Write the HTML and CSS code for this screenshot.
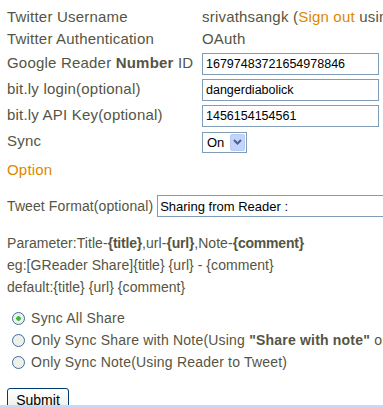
FILE: index.html
```
<!DOCTYPE html>
<html>
<head>
   <title>Twitter Sync Settings</title>
   <link rel="stylesheet" href="styles.css">
</head>
<body>
<div id="doc">
  <form id="settings">
    <table class="fields">
      <tr>
        <td class="lbl">Twitter Username</td>
        <td class="val">srivathsangk (<a href="#">Sign out</a> using OAuth)</td>
      </tr>
      <tr>
        <td class="lbl">Twitter Authentication</td>
        <td class="val">OAuth</td>
      </tr>
      <tr>
        <td class="lbl">Google Reader <b>Number</b> ID</td>
        <td class="val"><input class="txt" type="text" name="gid" value="16797483721654978846"/></td>
      </tr>
      <tr>
        <td class="lbl">bit.ly login(optional)</td>
        <td class="val"><input class="txt" type="text" name="bitly" value="dangerdiabolick"/></td>
      </tr>
      <tr>
        <td class="lbl">bit.ly API Key(optional)</td>
        <td class="val"><input class="txt" type="text" name="key" value="1456154154561"/></td>
      </tr>
      <tr>
        <td class="lbl">Sync</td>
        <td class="val">
          <span class="sel">
            <select name="sync"><option>On</option><option>Off</option></select>
            <span class="arrow"><svg width="11" height="8" viewBox="0 0 11 8"><path d="M2 2 L5.5 5.5 L9 2" fill="none" stroke="#4d6185" stroke-width="2"/></svg></span>
          </span>
        </td>
      </tr>
    </table>

    <h2 class="option">Option</h2>

    <div class="format">
      <label for="fmt">Tweet Format(optional)</label>
      <input class="txt wide" type="text" id="fmt" name="fmt" value="Sharing from Reader :"/>
    </div>

    <div class="help">
      <p>Parameter:Title-<b>{title}</b>,url-<b>{url}</b>,Note-<b>{comment}</b></p>
      <p>eg:[GReader Share]{title} {url} - {comment}</p>
      <p>default:{title} {url} {comment}</p>
    </div>

    <ul class="radios">
      <li><label><input type="radio" name="mode" checked/> Sync All Share</label></li>
      <li><label><input type="radio" name="mode"/> Only Sync Share with Note(Using <b>"Share with note"</b> or Note in Reader)</label></li>
      <li><label><input type="radio" name="mode"/> Only Sync Note(Using Reader to Tweet)</label></li>
    </ul>

    <div class="foot">
      <input class="btn" type="submit" value="Submit"/>
    </div>
  </form>
</div>
</body>
</html>
```

FILE: styles.css
```
html, body {
      margin: 0;
      overflow: hidden;
}
body {
      font-family: "Liberation Sans", Arial, sans-serif;
      color: #555544;
      background: #fff;
      letter-spacing: 0.2px;
}
a {
      color: #dd8800;
      text-decoration: none;
}
#doc {
      padding: 6px 0 0 7px;
      white-space: nowrap;
}

table.fields {
      border-collapse: collapse;
      table-layout: fixed;
      width: 420px;
      font-size: 15px;
}
table.fields td {
      padding: 0;
      height: 22px;
      line-height: 22px;
      vertical-align: middle;
      overflow: visible;
}
td.lbl {
      width: 195px;
}
table.fields tr:nth-child(n+3) td {
      height: 26px;
}

input.txt {
      box-sizing: border-box;
      width: 177px;
      height: 22px;
      border: 1px solid #7f9db9;
      padding: 0 3px;
      margin: 0;
      font-family: "Liberation Sans", Arial, sans-serif;
      font-size: 12.5px;
      letter-spacing: 0;
      color: #000;
      vertical-align: middle;
}

.sel {
      display: inline-flex;
      align-items: center;
      box-sizing: border-box;
      height: 21px;
      width: 45px;
      border: 1px solid #7f9db9;
      vertical-align: middle;
      margin-top: 1px;
}
.sel select {
      -webkit-appearance: none;
      appearance: none;
      border: none;
      background: #fff;
      font-family: "Liberation Sans", Arial, sans-serif;
      font-size: 13px;
      color: #000;
      padding: 0 0 0 4px;
      width: 27px;
      height: 17px;
      outline: none;
}
.sel .arrow {
      display: flex;
      align-items: center;
      justify-content: center;
      width: 15px;
      height: 17px;
      background: #c3d3fd;
      border: 1px solid #b9cbf3;
      box-sizing: border-box;
      border-radius: 2px;
}

h2.option {
      font-size: 15px;
      font-weight: normal;
      color: #dd8800;
      margin: 5px 0 0 0;
      line-height: 22px;
}

.format {
      font-size: 14px;
      margin-top: 14px;
      display: flex;
      align-items: center;
      gap: 4px;
      letter-spacing: 0.1px;
}
input.wide {
      width: 260px;
      height: 22px;
      font-size: 13px;
      padding: 0 2px;
      flex-shrink: 0;
}

.help {
      font-size: 14px;
      margin-top: 15px;
      letter-spacing: 0.05px;
}
.help p {
      margin: 0;
      line-height: 22px;
}
.help b {
      letter-spacing: -0.2px;
}

ul.radios {
      list-style: none;
      margin: 9px 0 0 0;
      padding: 0;
      font-size: 14px;
}
ul.radios li {
      line-height: 22px;
      height: 22px;
}
ul.radios input {
      -webkit-appearance: none;
      appearance: none;
      width: 13px;
      height: 13px;
      border: 1px solid #3d6e9f;
      border-radius: 50%;
      background: #eef0ea;
      margin: 0 2px 0 5px;
      vertical-align: -2px;
      box-sizing: border-box;
}
ul.radios input:checked {
      background: radial-gradient(circle, #3cb73c 0, #3cb73c 2px, #eef0ea 2.5px);
}

.foot {
      margin-top: 15px;
      height: 17px;
      overflow: hidden;
      border-bottom: 2px solid #c6d9f5;
      margin-left: -7px;
      padding-left: 7px;
}
input.btn {
      font-family: "Liberation Sans", Arial, sans-serif;
      font-size: 14px;
      color: #000;
      width: 62px;
      height: 24px;
      border: 1px solid #003c74;
      border-radius: 3px;
      background: linear-gradient(#fff, #f0f0ea 80%, #d6d0c5);
      padding: 0;
}
```
